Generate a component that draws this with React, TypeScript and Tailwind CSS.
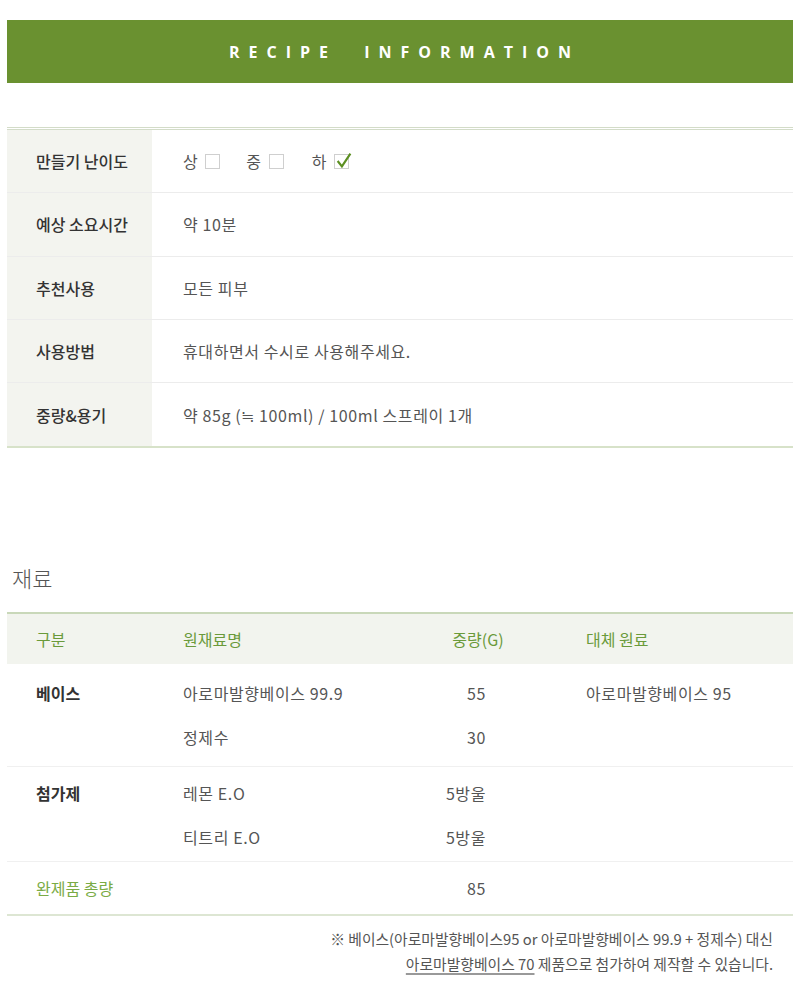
const font = { fontFamily: '"Noto Sans CJK KR", "Noto Sans", sans-serif' };

function Check({ on }: { on?: boolean }) {
  return (
    <span className="relative ml-[7px] inline-block h-[15px] w-[15px] border border-[#cfcfcf] bg-white">
      {on && (
        <svg viewBox="0 0 16 16" className="absolute -top-[3px] left-[0px] h-[17px] w-[17px]">
          <path d="M2.5 8.5 L6.5 13.5 L14.5 1.5" fill="none" stroke="#5c8f22" strokeWidth="2" />
        </svg>
      )}
    </span>
  );
}

const infoRows: { label: string; value: React.ReactNode }[] = [
  {
    label: "만들기 난이도",
    value: (
      <span className="flex items-center">
        <span>상</span>
        <Check />
        <span className="ml-[26px]">중</span>
        <Check />
        <span className="ml-[28px]">하</span>
        <Check on />
      </span>
    ),
  },
  { label: "예상 소요시간", value: "약 10분" },
  { label: "추천사용", value: "모든 피부" },
  { label: "사용방법", value: "휴대하면서 수시로 사용해주세요." },
  { label: "중량&용기", value: "약 85g (≒ 100ml) / 100ml 스프레이 1개" },
];

const groups = [
  {
    name: "베이스",
    pad: "pt-[7px] pb-[7px]",
    items: [
      { n: "아로마발향베이스 99.9", w: "55", alt: "아로마발향베이스 95" },
      { n: "정제수", w: "30", alt: "" },
    ],
  },
  {
    name: "첨가제",
    pad: "pt-[4px] pb-[2px]",
    items: [
      { n: "레몬 E.O", w: "5방울", alt: "" },
      { n: "티트리 E.O", w: "5방울", alt: "" },
    ],
  },
];

const cols = "grid grid-cols-[176px_237px_116px_1fr] items-center";

export default function App() {
  return (
    <div className="min-h-[997px] bg-white px-[7px] pt-[20px]" style={font}>
      <div className="flex h-[63px] items-center justify-center bg-[#6a9130]">
        <h1
          className="pl-[9px] text-[16px] font-bold tracking-[9px] text-white [word-spacing:14px]"
          style={{ fontFamily: '"Open Sans", sans-serif' }}
        >
          RECIPE INFORMATION
        </h1>
      </div>

      <div className="mt-[44px] border-t-[3px] border-b-2 border-double border-t-[#d3dcc8] border-b-[#d7e2c9]">
        {infoRows.map((r, i) => (
          <div
            key={r.label}
            className={`flex h-[63.3px] ${i < infoRows.length - 1 ? "border-b border-[#ececec]" : ""}`}
          >
            <div className="flex w-[145px] items-center bg-[#f3f4ef] pl-[29px] text-[16px] font-medium text-[#333]">
              {r.label}
            </div>
            <div className="flex items-center pl-[31px] text-[16px] tracking-[0.6px] text-[#555]">{r.value}</div>
          </div>
        ))}
      </div>

      <h2 className="mt-[114px] pl-[5px] text-[22px] font-light leading-[30px] text-[#555]">재료</h2>

      <div className="mt-[20px] border-t-2 border-b-2 border-t-[#c9d8b9] border-b-[#dde6d3] text-[16px]">
        <div className={`${cols} h-[50px] bg-[#f2f4ee] text-[#6a9a3a]`}>
          <span className="pl-[29px]">구분</span>
          <span>원재료명</span>
          <span className="text-center">중량(G)</span>
          <span className="pl-[50px]">대체 원료</span>
        </div>
        {groups.map((g) => (
          <div key={g.name} className={`border-b border-[#f0f0f0] ${g.pad}`}>
            {g.items.map((it, j) => (
              <div key={it.n} className={`${cols} h-[44px] tracking-[0.6px] text-[#555]`}>
                <span className="pl-[29px] font-bold tracking-normal text-[#333]">{j === 0 ? g.name : ""}</span>
                <span>{it.n}</span>
                <span className="pr-[50px] text-right">{it.w}</span>
                <span className="pl-[50px]">{it.alt}</span>
              </div>
            ))}
          </div>
        ))}
        <div className={`${cols} h-[52px] text-[#555]`}>
          <span className="pl-[29px] text-[#7aab45]">완제품 총량</span>
          <span></span>
          <span className="pr-[50px] text-right tracking-[0.6px]">85</span>
          <span></span>
        </div>
      </div>

      <p className="mt-[10px] pr-[20px] text-right text-[14.8px] leading-[25px] text-[#555]">
        ※ 베이스(아로마발향베이스95 or 아로마발향베이스 99.9 + 정제수) 대신
        <br />
        <span className="underline decoration-[#999] decoration-2 underline-offset-[3px]">아로마발향베이스 70</span> 제품으로 첨가하여 제작할 수 있습니다.
      </p>
    </div>
  );
}
